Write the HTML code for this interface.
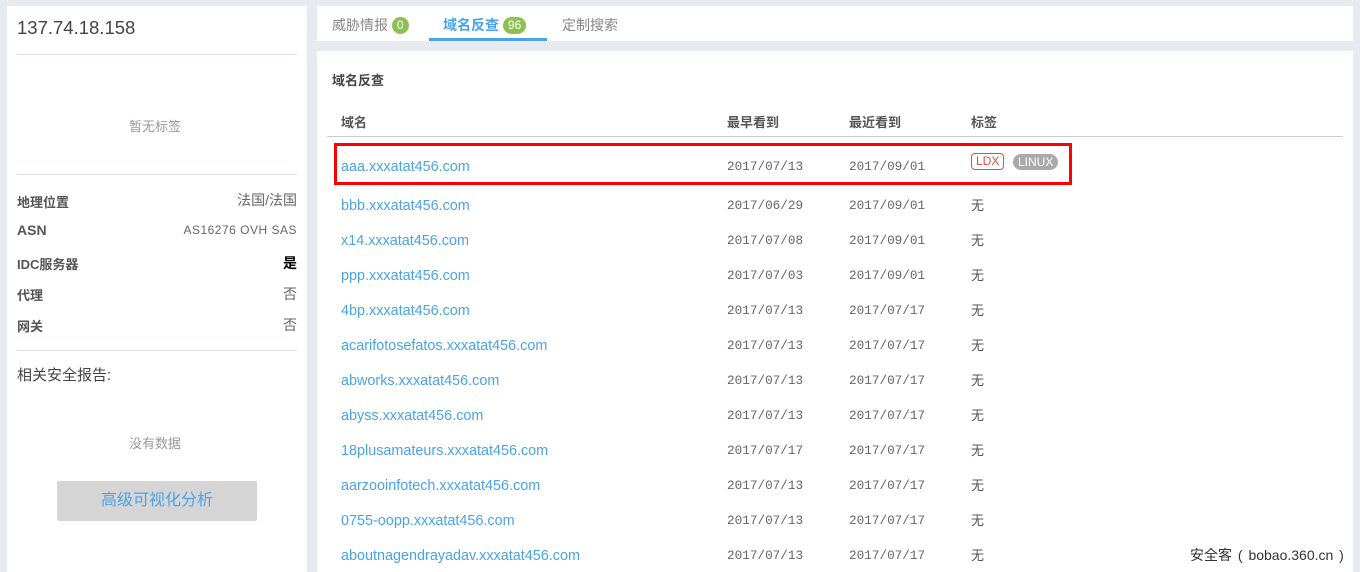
<!DOCTYPE html>
<html><head><meta charset="utf-8"><style>
*{margin:0;padding:0;box-sizing:border-box}
body{width:1360px;height:572px;overflow:hidden;background:#e7eaf1;font-family:"Liberation Sans","Noto Sans CJK SC",sans-serif;position:relative;color:#555}
.a{position:absolute;white-space:nowrap}
.lp{position:absolute;left:7px;top:6px;width:300px;height:566px;background:#fff}
.hr{position:absolute;left:17px;width:280px;height:1px;background:#dde2ea}
.lab{left:17px;font-size:13px;font-weight:bold;color:#555}
.val{right:1063px;font-size:13px;color:#666;text-align:right}
.dom{left:341px;font-size:14.4px;color:#4aa3e8}
.d{font-family:"Liberation Mono",monospace;font-size:12.7px;color:#666}
.none{left:971px;font-size:13px;color:#555}
</style></head><body>
<div class="lp"></div>
<div class="a" style="left:17px;top:17px;font-size:18.5px;color:#444">137.74.18.158</div>
<div class="hr" style="top:54px"></div>
<div class="a" style="left:129px;top:116px;font-size:13px;color:#999">暂无标签</div>
<div class="hr" style="top:174px"></div>
<div class="a lab" style="top:192px">地理位置</div><div class="a val" style="top:190px;font-size:14px">法国/法国</div>
<div class="a lab" style="top:222px;font-size:14px">ASN</div><div class="a val" style="top:223px;font-size:12px;letter-spacing:.5px">AS16276 OVH SAS</div>
<div class="a lab" style="top:254px">IDC服务器</div><div class="a val" style="top:253px;color:#000;font-weight:bold;font-size:14px">是</div>
<div class="a lab" style="top:285px">代理</div><div class="a val" style="top:284px;font-size:14px">否</div>
<div class="a lab" style="top:316px">网关</div><div class="a val" style="top:315px;font-size:14px">否</div>
<div class="hr" style="top:350px"></div>
<div class="a" style="left:17px;top:364px;font-size:15px;color:#444">相关安全报告:</div>
<div class="a" style="left:129px;top:433px;font-size:13px;color:#999">没有数据</div>
<div class="a" style="left:57px;top:481px;width:200px;height:40px;background:#d5d5d5;border-radius:2px;color:#4aa3e8;font-size:16px;text-align:center;line-height:40px">高级可视化分析</div>

<div class="a" style="left:317px;top:6px;width:1036px;height:35px;background:#fff"></div>
<div class="a" style="left:332px;top:15px;font-size:14px;color:#888">威胁情报 <span style="display:inline-block;background:#8cc152;color:#fff;border-radius:9px;font-size:12px;padding:0 5px;line-height:17px;vertical-align:1px">0</span></div>
<div class="a" style="left:443px;top:15px;font-size:14px;color:#4aa3e8;font-weight:bold">域名反查 <span style="display:inline-block;background:#8cc152;color:#fff;border-radius:9px;font-size:12px;padding:0 5px;line-height:17px;vertical-align:1px;font-weight:normal">96</span></div>
<div class="a" style="left:429px;top:38px;width:118px;height:3px;background:#4aa3e8"></div>
<div class="a" style="left:562px;top:15px;font-size:14px;color:#888">定制搜索</div>

<div class="a" style="left:317px;top:51px;width:1036px;height:521px;background:#fff"></div>
<div class="a" style="left:332px;top:70px;font-size:13px;font-weight:bold;color:#444">域名反查</div>
<div class="a" style="left:341px;top:112px;font-size:13px;font-weight:bold;color:#555">域名</div>
<div class="a" style="left:727px;top:112px;font-size:13px;font-weight:bold;color:#555">最早看到</div>
<div class="a" style="left:849px;top:112px;font-size:13px;font-weight:bold;color:#555">最近看到</div>
<div class="a" style="left:971px;top:112px;font-size:13px;font-weight:bold;color:#555">标签</div>
<div class="a" style="left:327px;top:136px;width:1016px;height:1px;background:#ccc"></div>
<div class="a" style="left:334px;top:143px;width:738px;height:42px;border:3px solid #f00"></div>
<div class="a" style="left:971px;top:153px;border:1px solid #e74c3c;color:#e74c3c;font-size:12px;border-radius:4px;padding:0 4px;line-height:15px">LDX</div>
<div class="a" style="left:1013px;top:154px;background:#aaa;color:#fff;font-size:12px;border-radius:8px;padding:0 5px;line-height:16px">LINUX</div>
<div id="rows"></div>
<div class="a" style="left:1190px;top:545px;font-size:14px;color:#333;word-spacing:2px">安全客 ( bobao.360.cn )</div>
<script>
var r=[["aaa","07/13","09/01"],["bbb","06/29","09/01"],["x14","07/08","09/01"],["ppp","07/03","09/01"],["4bp","07/13","07/17"],["acarifotosefatos","07/13","07/17"],["abworks","07/13","07/17"],["abyss","07/13","07/17"],["18plusamateurs","07/17","07/17"],["aarzooinfotech","07/13","07/17"],["0755-oopp","07/13","07/17"],["aboutnagendrayadav","07/13","07/17"]];
var h="";r.forEach(function(x,i){var c=166+i*35;if(i>0)c=205+(i-1)*35;
h+='<div class="a dom" style="top:'+(c-7)+'px">'+x[0]+'.xxxatat456.com</div><div class="a d" style="left:727px;top:'+(c-7)+'px">2017/'+x[1]+'</div><div class="a d" style="left:849px;top:'+(c-7)+'px">2017/'+x[2]+'</div>';
if(i>0)h+='<div class="a none" style="top:'+(c-10)+'px">无</div>';});
document.getElementById("rows").innerHTML=h;
</script>
</body></html>
